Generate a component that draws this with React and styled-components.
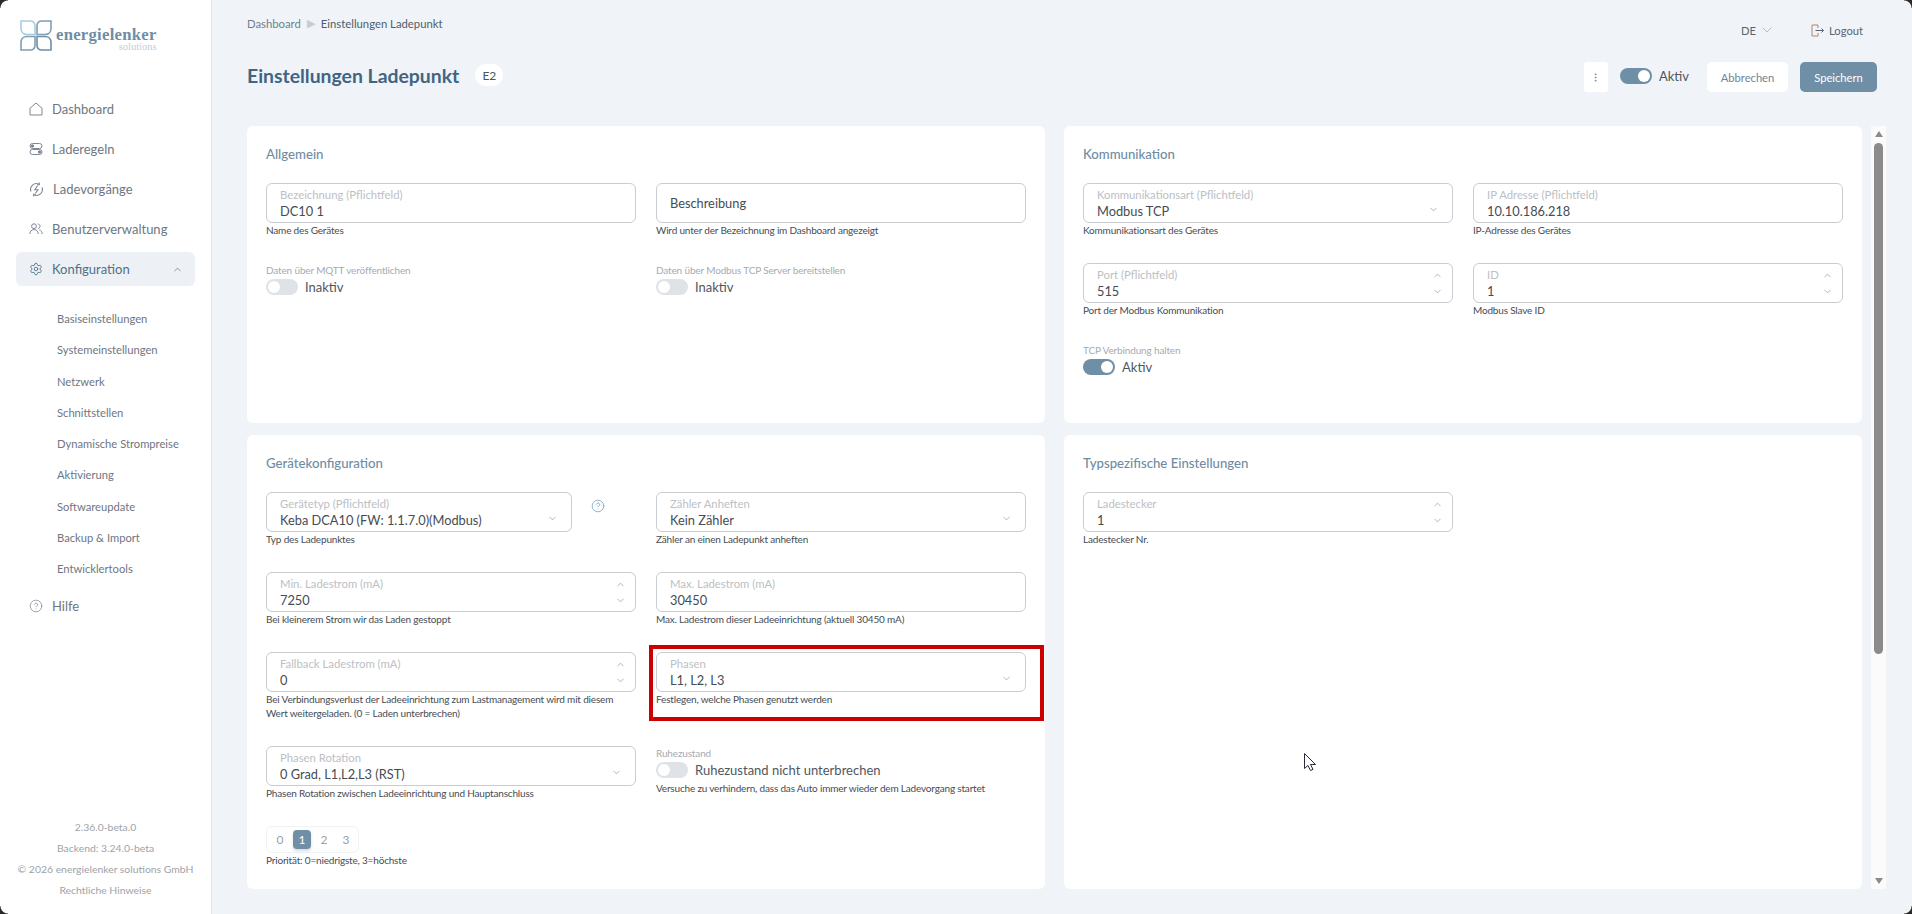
import React from "react";
import styled, { createGlobalStyle } from "styled-components";
import { ChevronDown, ChevronUp, Settings, CircleHelp, EllipsisVertical } from "lucide-react";

const GlobalStyle = createGlobalStyle`
  html, body {
    margin: 0;
    padding: 0;
    height: 100%;
    overflow: hidden;
    background: #f0f4f8;
    font-family: "Lato", "Liberation Sans", sans-serif;
  }
  * {
    box-sizing: border-box;
  }
`;

const Page = styled.div`
  display: flex;
  width: 1912px;
  height: 914px;
  position: relative;
  overflow: hidden;
`;

const Corner = styled.div`
  position: absolute;
  width: 8px;
  height: 8px;
  ${(p) => (p.$bottom ? "bottom: 0;" : "top: 0;")}
  ${(p) => (p.$right ? "right: 0;" : "left: 0;")}
  background: radial-gradient(
    circle at ${(p) => (p.$right ? "0" : "100%")} ${(p) => (p.$bottom ? "0" : "100%")},
    transparent 7px,
    #2a2a2a 8px
  );
`;

/* sidebar */
const Sidebar = styled.aside`
  width: 212px;
  flex: none;
  background: #fff;
  border-right: 1px solid #e2e6ea;
  display: flex;
  flex-direction: column;
`;

const LogoRow = styled.div`
  display: flex;
  align-items: flex-start;
  gap: 4px;
  padding: 20px 0 0 20px;
  height: 89px;
`;

const LogoText = styled.div`
  display: flex;
  flex-direction: column;
  align-items: flex-end;
  margin-top: 6px;
`;

const LogoName = styled.span`
  font-family: "Liberation Serif", serif;
  font-weight: 700;
  font-size: 16.7px;
  line-height: 18px;
  letter-spacing: 0.25px;
  color: #6f8ea5;
`;

const LogoSub = styled.span`
  font-family: "Liberation Serif", serif;
  font-size: 10.5px;
  line-height: 10px;
  margin-top: -2px;
  color: #b9cfe0;
`;

const Nav = styled.nav`
  display: flex;
  flex-direction: column;
  padding-left: 16px;
`;

const NavItem = styled.div`
  display: flex;
  align-items: center;
  height: ${(p) => (p.$active ? "34px" : "40px")};
  margin: ${(p) => (p.$active ? "3px 0" : "0")};
  width: 179px;
  padding: 0 13px;
  gap: 9px;
  border-radius: 6px;
  font-size: 13px;
  color: ${(p) => (p.$active ? "#4d7089" : "#6f7682")};
  background: ${(p) => (p.$active ? "#edf1f5" : "transparent")};

  svg {
    flex: none;
    color: ${(p) => (p.$active ? "#4d7089" : "#7d8793")};
  }
`;

const NavChevron = styled.span`
  margin-left: auto;
  display: flex;
  margin-right: -1px;
`;

const SubNav = styled.div`
  display: flex;
  flex-direction: column;
  padding: 14px 0 2px 57px;
`;

const SubItem = styled.div`
  height: 31.25px;
  display: flex;
  align-items: center;
  font-size: 11.2px;
  color: #6f7682;
`;

const SideFooter = styled.div`
  margin-top: auto;
  padding-bottom: 13px;
  display: flex;
  flex-direction: column;
  align-items: center;
  font-size: 10.4px;
  color: #9ea2a8;
`;

const FooterLine = styled.div`
  height: 21px;
  line-height: 21px;
`;

/* main column */
const Main = styled.main`
  flex: 1;
  min-width: 0;
  display: flex;
  flex-direction: column;
  padding-left: 35px;
`;

const TopBar = styled.div`
  height: 62px;
  display: flex;
  align-items: flex-start;
  justify-content: space-between;
  padding: 16px 49px 0 0;
`;

const Crumbs = styled.div`
  display: flex;
  align-items: center;
  gap: 6px;
  font-size: 11.3px;
  height: 14px;
  color: #6f7f8d;
`;

const CrumbArrow = styled.span`
  color: #c3cbd3;
  font-size: 11px;
`;

const CrumbCurrent = styled.span`
  color: #4f5d69;
`;

const TopRight = styled.div`
  display: flex;
  align-items: center;
  gap: 36px;
  font-size: 11.2px;
  height: 28px;
  color: #5a6470;
`;

const LangPick = styled.div`
  display: flex;
  align-items: center;
  gap: 3px;
`;

const LogoutLink = styled.div`
  display: flex;
  align-items: center;
  gap: 5px;
`;

const HeaderRow = styled.div`
  height: 64px;
  display: flex;
  align-items: flex-start;
  justify-content: space-between;
  padding-right: 35px;
`;

const TitleWrap = styled.div`
  display: flex;
  align-items: center;
  gap: 16px;
  height: 24px;
  margin-top: 1px;
`;

const Title = styled.h1`
  margin: 0;
  font-size: 19.4px;
  font-weight: 700;
  color: #3f6583;
`;

const Badge = styled.span`
  width: 28px;
  height: 22px;
  border-radius: 11px;
  background: #fff;
  font-size: 12px;
  color: #4a5560;
  display: flex;
  align-items: center;
  justify-content: center;
`;

const Actions = styled.div`
  display: flex;
  align-items: center;
  height: 30px;
`;

const MenuButton = styled.div`
  width: 24px;
  height: 30px;
  background: #fff;
  border-radius: 3px;
  display: flex;
  align-items: center;
  justify-content: center;
  color: #7a8a98;
  margin-right: 12px;
`;

const Button = styled.div`
  height: 30px;
  display: flex;
  align-items: center;
  justify-content: center;
  border-radius: 5px;
  font-size: 11.2px;
  width: ${(p) => p.$width}px;
  margin-left: ${(p) => p.$gap}px;
  background: ${(p) => (p.$primary ? "#6f8fa6" : "#fff")};
  color: ${(p) => (p.$primary ? "#fff" : "#6f8598")};
`;

const Body = styled.div`
  display: flex;
  align-items: stretch;
  height: 763px;
`;

const CardGrid = styled.div`
  display: grid;
  grid-template-columns: 798px 798px;
  grid-template-rows: 297px 454px;
  gap: 12px 19px;
`;

const Card = styled.section`
  background: #fff;
  border-radius: 6px;
  padding: 0 19px;
`;

const CardTitle = styled.h2`
  margin: 0;
  height: 57px;
  padding-top: 19px;
  font-size: 13.2px;
  line-height: 18px;
  font-weight: 500;
  color: #6f8ca3;
`;

const Form = styled.div`
  display: grid;
  grid-template-columns: 370px 370px;
  column-gap: 20px;
`;

const Cell = styled.div`
  padding-bottom: 26px;
  position: relative;
`;

const Inline = styled.div`
  display: flex;
  align-items: flex-start;
  gap: 19px;
`;

const Fieldbox = styled.div`
  position: relative;
  height: 40px;
  flex: 1;
  border: 1px solid #c9cdd1;
  border-radius: 6px;
  padding: 3px 40px 0 13px;
  background: #fff;
`;

const FieldLabel = styled.div`
  font-size: 11.3px;
  line-height: 15px;
  color: #bcc0c4;
  white-space: nowrap;
`;

const FieldValue = styled.div`
  font-size: 12.8px;
  line-height: 19px;
  margin-top: ${(p) => (p.$plain ? "7px" : "0")};
  color: #454c54;
  white-space: nowrap;
`;

const Helper = styled.div`
  font-size: 10px;
  line-height: 14px;
  letter-spacing: -0.18px;
  color: #454c54;
`;

const SelectArrow = styled.span`
  position: absolute;
  right: 13px;
  top: 20px;
  display: flex;
  color: #8f979f;
`;

const Spinner = styled.span`
  position: absolute;
  right: 9px;
  top: 6px;
  display: flex;
  flex-direction: column;
  gap: 5px;
  color: #8f979f;
`;

const HelpIcon = styled.span`
  display: flex;
  margin-top: 7px;
  margin-right: 31px;
  color: #6f9bc0;
`;

const MiniLabel = styled.div`
  font-size: 10px;
  line-height: 14px;
  letter-spacing: -0.15px;
  color: #a6abb0;
`;

const SwitchRow = styled.div`
  display: flex;
  align-items: center;
  gap: 7px;
  height: 16px;
  margin-top: ${(p) => (p.$flush ? "-2px" : "2px")};
  font-size: 13px;
  color: #4f565e;
`;

const Track = styled.span`
  width: 32px;
  height: 16px;
  flex: none;
  border-radius: 8px;
  padding: 2px;
  display: flex;
  justify-content: ${(p) => (p.$on ? "flex-end" : "flex-start")};
  background: ${(p) => (p.$on ? "#6f8fa6" : "#dfe2e6")};
`;

const Knob = styled.span`
  width: 12px;
  height: 12px;
  border-radius: 50%;
  background: #fff;
`;

const SwitchHelper = styled(Helper)`
  margin-top: 3px;
`;

const Priority = styled.div`
  display: inline-flex;
  align-items: center;
  width: 93px;
  height: 27px;
  border: 1px solid #f1f2f4;
  border-radius: 6px;
  padding-left: 3px;
  gap: 2px;
`;

const PriorityItem = styled.span`
  width: ${(p) => (p.$active ? "18px" : "20px")};
  margin: ${(p) => (p.$active ? "0 1px" : "0")};
  height: 19px;
  border-radius: 4px;
  display: flex;
  align-items: center;
  justify-content: center;
  font-size: 12px;
  background: ${(p) => (p.$active ? "#6f8fa6" : "transparent")};
  color: ${(p) => (p.$active ? "#fff" : "#9aa0a6")};
  box-shadow: ${(p) => (p.$active ? "0 2px 3px rgba(0,0,0,0.15)" : "none")};
`;

const Highlight = styled.div`
  position: absolute;
  left: -7px;
  top: -7px;
  width: 395px;
  height: 76px;
  border: 4px solid #cc0000;
  pointer-events: none;
`;

const Cursor = styled.svg`
  position: absolute;
  left: 1304px;
  top: 753px;
`;

/* scrollbar drawn as in the picture */
const ScrollTrack = styled.div`
  width: 15px;
  margin-left: 9px;
  background: #fbfbfb;
  display: flex;
  flex-direction: column;
  align-items: center;
  padding-top: 5px;
`;

const ScrollArrow = styled.span`
  width: 0;
  height: 0;
  border-left: 4px solid transparent;
  border-right: 4px solid transparent;
  ${(p) => (p.$down ? "border-top: 6px solid #8b8b8b;" : "border-bottom: 6px solid #8b8b8b;")}
  ${(p) => (p.$down ? "margin-top: auto; margin-bottom: 5px;" : "")}
`;

const ScrollThumb = styled.span`
  width: 9px;
  height: 511px;
  margin-top: 6px;
  border-radius: 5px;
  background: #8b8b8b;
`;

const HomeIcon = () => (
  <svg width="14" height="14" viewBox="0 0 14 14" fill="none" stroke="currentColor" strokeWidth="1">
    <path d="M1 6.2 7 1l6 5.2V13H1z" />
  </svg>
);

const RulesIcon = () => (
  <svg width="14" height="14" viewBox="0 0 14 14" fill="none" stroke="currentColor" strokeWidth="1">
    <rect x="1" y="1.5" width="12" height="5" rx="2.5" />
    <rect x="1" y="7.5" width="12" height="5" rx="2.5" />
    <circle cx="3.5" cy="4" r="1.2" fill="currentColor" />
    <circle cx="10.5" cy="10" r="1.2" fill="currentColor" />
  </svg>
);

const SessionsIcon = () => (
  <svg width="15" height="15" viewBox="0 0 15 15" fill="none" stroke="currentColor" strokeWidth="1.1">
    <path d="M2 9.5A5.8 5.8 0 0 1 10 2.2M13 5.5A5.8 5.8 0 0 1 5 12.8" />
    <path d="M10.3 0.5v2.2H8M4.7 14.5v-2.2H7" />
    <path d="M8.5 3.8 5.8 7.8h3.2L6.5 11.3" />
  </svg>
);

const UsersIcon = () => (
  <svg width="14" height="14" viewBox="0 0 14 14" fill="none" stroke="currentColor" strokeWidth="1">
    <circle cx="5" cy="4.2" r="2.4" />
    <path d="M0.8 12c0-2.6 1.8-4.4 4.2-4.4S9.200 9.400 9.200 12" />
    <path d="M8.800 2c1.300 0 2.200 1 2.200 2.200S10.100 6.500 8.800 6.500M10.300 7.900c1.700.5 2.900 2 2.900 4.100" />
  </svg>
);

const LogoutIcon = () => (
  <svg width="13" height="13" viewBox="0 0 13 13" fill="none" strokeWidth="1">
    <path d="M7 4V1H1v11h6V9" stroke="#b5846f" />
    <path d="M4.500 6.500h8M10.500 4.500l2 2-2 2" stroke="#5a6470" />
  </svg>
);

const Logo = () => (
  <svg width="32" height="31" viewBox="0 0 32 31" fill="none" strokeWidth="1.6">
    <path d="M1 1h9c3.500 0 5 2.500 5 5v8.500H7C3.500 14.500 1 12 1 8.500z" stroke="#a9cbe0" />
    <path d="M31 1h-9c-3.500 0-5 2.500-5 5v8.500h8c3.500 0 6-2.500 6-6z" stroke="#7f9fb5" />
    <path d="M1 30h9c3.500 0 5-2.500 5-5v-8.500H7c-3.500 0-6 2.500-6 6z" stroke="#7f9fb5" />
    <path d="M31 30h-9c-3.500 0-5-2.500-5-5v-8.500h8c3.500 0 6 2.500 6 6z" stroke="#6f8fa6" />
  </svg>
);

const Switch = ({ on, children, flush }) => (
  <SwitchRow $flush={flush}>
    <Track $on={on}>
      <Knob />
    </Track>
    {children}
  </SwitchRow>
);

const Field = ({ label, value, kind }) => (
  <Fieldbox>
    {label && <FieldLabel>{label}</FieldLabel>}
    <FieldValue $plain={!label}>{value}</FieldValue>
    {kind === "select" && (
      <SelectArrow>
        <ChevronDown size={11} strokeWidth={1.5} />
      </SelectArrow>
    )}
    {kind === "number" && (
      <Spinner>
        <ChevronUp size={11} strokeWidth={1.5} />
        <ChevronDown size={11} strokeWidth={1.5} />
      </Spinner>
    )}
  </Fieldbox>
);

const subItems = [
  "Basiseinstellungen",
  "Systemeinstellungen",
  "Netzwerk",
  "Schnittstellen",
  "Dynamische Strompreise",
  "Aktivierung",
  "Softwareupdate",
  "Backup & Import",
  "Entwicklertools",
];

const App = () => {
  return (
    <>
      <GlobalStyle />
      <Page>
        <Sidebar>
          <LogoRow>
            <Logo />
            <LogoText>
              <LogoName>energielenker</LogoName>
              <LogoSub>solutions</LogoSub>
            </LogoText>
          </LogoRow>
          <Nav>
            <NavItem>
              <HomeIcon />
              Dashboard
            </NavItem>
            <NavItem>
              <RulesIcon />
              Laderegeln
            </NavItem>
            <NavItem>
              <SessionsIcon />
              Ladevorgänge
            </NavItem>
            <NavItem>
              <UsersIcon />
              Benutzerverwaltung
            </NavItem>
            <NavItem $active>
              <Settings size={14} strokeWidth={1.5} />
              Konfiguration
              <NavChevron>
                <ChevronUp size={11} strokeWidth={1.5} />
              </NavChevron>
            </NavItem>
          </Nav>
          <SubNav>
            {subItems.map((item) => (
              <SubItem key={item}>{item}</SubItem>
            ))}
          </SubNav>
          <Nav>
            <NavItem>
              <CircleHelp size={14} strokeWidth={1.25} />
              Hilfe
            </NavItem>
          </Nav>
          <SideFooter>
            <FooterLine>2.36.0-beta.0</FooterLine>
            <FooterLine>Backend: 3.24.0-beta</FooterLine>
            <FooterLine>© 2026 energielenker solutions GmbH</FooterLine>
            <FooterLine>Rechtliche Hinweise</FooterLine>
          </SideFooter>
        </Sidebar>

        <Main>
          <TopBar>
            <Crumbs>
              Dashboard
              <CrumbArrow>▶</CrumbArrow>
              <CrumbCurrent>Einstellungen Ladepunkt</CrumbCurrent>
            </Crumbs>
            <TopRight>
              <LangPick>
                DE
                <ChevronDown size={16} strokeWidth={1} color="#9aa2aa" />
              </LangPick>
              <LogoutLink>
                <LogoutIcon />
                Logout
              </LogoutLink>
            </TopRight>
          </TopBar>

          <HeaderRow>
            <TitleWrap>
              <Title>Einstellungen Ladepunkt</Title>
              <Badge>E2</Badge>
            </TitleWrap>
            <Actions>
              <MenuButton>
                <EllipsisVertical size={11} strokeWidth={2} />
              </MenuButton>
              <Switch on flush>
                Aktiv
              </Switch>
              <Button $width={81} $gap={18}>
                Abbrechen
              </Button>
              <Button $width={77} $gap={12} $primary>
                Speichern
              </Button>
            </Actions>
          </HeaderRow>

          <Body>
            <CardGrid>
              <Card>
                <CardTitle>Allgemein</CardTitle>
                <Form>
                  <Cell>
                    <Field label="Bezeichnung (Pflichtfeld)" value="DC10 1" />
                    <Helper>Name des Gerätes</Helper>
                  </Cell>
                  <Cell>
                    <Field value="Beschreibung" />
                    <Helper>Wird unter der Bezeichnung im Dashboard angezeigt</Helper>
                  </Cell>
                  <Cell>
                    <MiniLabel>Daten über MQTT veröffentlichen</MiniLabel>
                    <Switch>Inaktiv</Switch>
                  </Cell>
                  <Cell>
                    <MiniLabel>Daten über Modbus TCP Server bereitstellen</MiniLabel>
                    <Switch>Inaktiv</Switch>
                  </Cell>
                </Form>
              </Card>

              <Card>
                <CardTitle>Kommunikation</CardTitle>
                <Form>
                  <Cell>
                    <Field label="Kommunikationsart (Pflichtfeld)" value="Modbus TCP" kind="select" />
                    <Helper>Kommunikationsart des Gerätes</Helper>
                  </Cell>
                  <Cell>
                    <Field label="IP Adresse (Pflichtfeld)" value="10.10.186.218" />
                    <Helper>IP-Adresse des Gerätes</Helper>
                  </Cell>
                  <Cell>
                    <Field label="Port (Pflichtfeld)" value="515" kind="number" />
                    <Helper>Port der Modbus Kommunikation</Helper>
                  </Cell>
                  <Cell>
                    <Field label="ID" value="1" kind="number" />
                    <Helper>Modbus Slave ID</Helper>
                  </Cell>
                  <Cell>
                    <MiniLabel>TCP Verbindung halten</MiniLabel>
                    <Switch on>Aktiv</Switch>
                  </Cell>
                </Form>
              </Card>

              <Card>
                <CardTitle>Gerätekonfiguration</CardTitle>
                <Form>
                  <Cell>
                    <Inline>
                      <Field label="Gerätetyp (Pflichtfeld)" value="Keba DCA10 (FW: 1.1.7.0)(Modbus)" kind="select" />
                      <HelpIcon>
                        <CircleHelp size={14} strokeWidth={1.25} />
                      </HelpIcon>
                    </Inline>
                    <Helper>Typ des Ladepunktes</Helper>
                  </Cell>
                  <Cell>
                    <Field label="Zähler Anheften" value="Kein Zähler" kind="select" />
                    <Helper>Zähler an einen Ladepunkt anheften</Helper>
                  </Cell>
                  <Cell>
                    <Field label="Min. Ladestrom (mA)" value="7250" kind="number" />
                    <Helper>Bei kleinerem Strom wir das Laden gestoppt</Helper>
                  </Cell>
                  <Cell>
                    <Field label="Max. Ladestrom (mA)" value="30450" />
                    <Helper>Max. Ladestrom dieser Ladeeinrichtung (aktuell 30450 mA)</Helper>
                  </Cell>
                  <Cell>
                    <Field label="Fallback Ladestrom (mA)" value="0" kind="number" />
                    <Helper>
                      Bei Verbindungsverlust der Ladeeinrichtung zum Lastmanagement wird mit diesem Wert
                      weitergeladen. (0 = Laden unterbrechen)
                    </Helper>
                  </Cell>
                  <Cell>
                    <Field label="Phasen" value="L1, L2, L3" kind="select" />
                    <Helper>Festlegen, welche Phasen genutzt werden</Helper>
                    <Highlight />
                  </Cell>
                  <Cell>
                    <Field label="Phasen Rotation" value="0 Grad, L1,L2,L3 (RST)" kind="select" />
                    <Helper>Phasen Rotation zwischen Ladeeinrichtung und Hauptanschluss</Helper>
                  </Cell>
                  <Cell>
                    <MiniLabel>Ruhezustand</MiniLabel>
                    <Switch>Ruhezustand nicht unterbrechen</Switch>
                    <SwitchHelper>Versuche zu verhindern, dass das Auto immer wieder dem Ladevorgang startet</SwitchHelper>
                  </Cell>
                  <Cell>
                    <Priority>
                      <PriorityItem>0</PriorityItem>
                      <PriorityItem $active>1</PriorityItem>
                      <PriorityItem>2</PriorityItem>
                      <PriorityItem>3</PriorityItem>
                    </Priority>
                    <Helper>Priorität: 0=niedrigste, 3=höchste</Helper>
                  </Cell>
                </Form>
              </Card>

              <Card>
                <CardTitle>Typspezifische Einstellungen</CardTitle>
                <Form>
                  <Cell>
                    <Field label="Ladestecker" value="1" kind="number" />
                    <Helper>Ladestecker Nr.</Helper>
                  </Cell>
                </Form>
              </Card>
            </CardGrid>

            <ScrollTrack>
              <ScrollArrow />
              <ScrollThumb />
              <ScrollArrow $down />
            </ScrollTrack>
          </Body>
        </Main>

        <Cursor width="13" height="18" viewBox="0 0 13 18" fill="#fff" stroke="#2a2a3a" strokeWidth="1">
          <path d="M0.500 0.500v15l3.500-3 2.500 5 2.500-1.200-2.500-4.800h5z" />
        </Cursor>

        <Corner />
        <Corner $right />
        <Corner $bottom />
        <Corner $bottom $right />
      </Page>
    </>
  );
};

export default App;
